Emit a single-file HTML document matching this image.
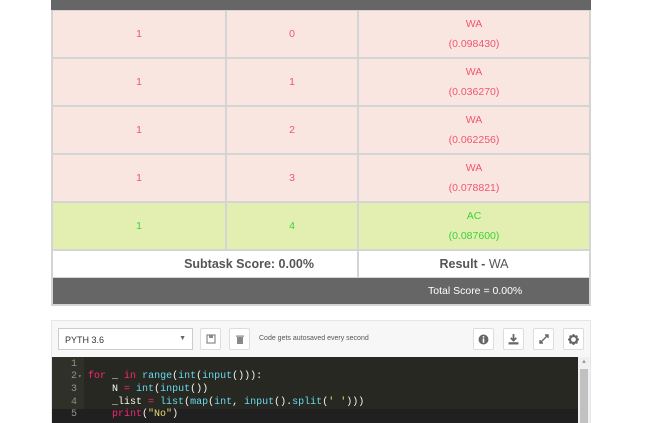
<!DOCTYPE html>
<html><head><meta charset="utf-8"><style>
*{margin:0;padding:0;box-sizing:border-box}
body{width:645px;height:423px;overflow:hidden;background:#fff;font-family:"Liberation Sans",Arial,sans-serif;position:relative}
.a{position:absolute}
.hdr{left:51px;top:0;width:540px;height:10px;background:#666}
.tbl{left:51px;top:10px;width:540px;height:296px;background:#d4d4d4}
.c{position:absolute;display:flex;align-items:center;justify-content:center;flex-direction:column;font-size:10.5px;text-align:center}
.r{background:#f9e6e1;color:#f0566f}
.g{background:#e3efb0;color:#3ed13e}
.c div{line-height:20px}
.w{background:#fff;color:#555;font-size:12.5px;font-weight:bold}
.tot{background:#666;color:#fff;font-size:10.5px}
.btn{position:absolute;width:21px;height:22px;border:1px solid #ddd;background:#fff;border-radius:2px;display:flex;align-items:center;justify-content:center}
.code{font-family:"Liberation Mono","DejaVu Sans Mono",monospace;font-size:10px;color:#f8f8f2}
.ln{position:absolute;left:52px;width:25px;text-align:right;color:#8f908a;font-family:"Liberation Mono",monospace;font-size:10px}
.cl{position:absolute;left:88px;white-space:pre}
.k{color:#f92672}.f{color:#66d9ef}.s{color:#e6db74}
</style></head><body>
<div class="a hdr"></div>
<div class="a tbl">
<div class="c r" style="left:2px;top:1px;width:172px;height:46px">1</div>
<div class="c r" style="left:176px;top:1px;width:130px;height:46px">0</div>
<div class="c r" style="left:308px;top:1px;width:230px;height:46px"><div>WA</div><div>(0.098430)</div></div>
<div class="c r" style="left:2px;top:49px;width:172px;height:46px">1</div>
<div class="c r" style="left:176px;top:49px;width:130px;height:46px">1</div>
<div class="c r" style="left:308px;top:49px;width:230px;height:46px"><div>WA</div><div>(0.036270)</div></div>
<div class="c r" style="left:2px;top:97px;width:172px;height:46px">1</div>
<div class="c r" style="left:176px;top:97px;width:130px;height:46px">2</div>
<div class="c r" style="left:308px;top:97px;width:230px;height:46px"><div>WA</div><div>(0.062256)</div></div>
<div class="c r" style="left:2px;top:145px;width:172px;height:46px">1</div>
<div class="c r" style="left:176px;top:145px;width:130px;height:46px">3</div>
<div class="c r" style="left:308px;top:145px;width:230px;height:46px"><div>WA</div><div>(0.078821)</div></div>
<div class="c g" style="left:2px;top:193px;width:172px;height:46px">1</div>
<div class="c g" style="left:176px;top:193px;width:130px;height:46px">4</div>
<div class="c g" style="left:308px;top:193px;width:230px;height:46px"><div>AC</div><div>(0.087600)</div></div>
<div class="c w" style="left:2px;top:241px;width:304px;height:26px;align-items:flex-end;padding-right:43px">Subtask Score: 0.00%</div>
<div class="c w" style="left:308px;top:241px;width:230px;height:26px;flex-direction:row">Result -&nbsp;<span style="font-weight:normal">WA</span></div>
<div class="c tot" style="left:2px;top:268px;width:536px;height:26px;flex-direction:row;justify-content:flex-start;padding-left:375px">Total Score = 0.00%</div>
</div>

<div class="a" style="left:51px;top:320px;width:540px;height:103px;background:#f7f7f7;border:1px solid #e6e6e6"></div>
<div class="a" style="left:58px;top:328px;width:135px;height:22px;background:#fff;border:1px solid #ccc;font-size:9px;color:#333;padding:6px 0 0 6px">PYTH 3.6<span style="position:absolute;right:6px;top:6px;font-size:7px;color:#666">▼</span></div>
<div class="btn" style="left:200px;top:328px"><svg width="10" height="10" viewBox="0 0 10 10"><rect x="1" y="1" width="8" height="8" fill="none" stroke="#888" stroke-width="1.2"/><rect x="3" y="1" width="4" height="3" fill="#888"/></svg></div>
<div class="btn" style="left:229px;top:328px"><svg width="10" height="10" viewBox="0 0 10 10"><rect x="2" y="3" width="6" height="7" fill="#888"/><rect x="1" y="1.5" width="8" height="1.2" fill="#888"/></svg></div>
<div class="a" style="left:259px;top:335px;font-size:7px;color:#555">Code gets autosaved every second</div>
<div class="btn" style="left:473px;top:328px"><svg width="11" height="11" viewBox="0 0 10 10"><circle cx="5" cy="5" r="4.5" fill="#666"/><rect x="4.3" y="4" width="1.4" height="4" fill="#fff"/><circle cx="5" cy="2.6" r="0.8" fill="#fff"/></svg></div>
<div class="btn" style="left:503px;top:328px"><svg width="11" height="11" viewBox="0 0 10 10"><path d="M5 0v6M2.5 3.5L5 6l2.5-2.5" stroke="#666" stroke-width="1.6" fill="none"/><rect x="0.5" y="7.5" width="9" height="2" fill="#666"/></svg></div>
<div class="btn" style="left:533px;top:328px"><svg width="10" height="10" viewBox="0 0 10 10"><path d="M1 9L9 1M6 1h3v3M1 6v3h3" stroke="#666" stroke-width="1.4" fill="none"/></svg></div>
<div class="btn" style="left:563px;top:328px"><svg width="11" height="11" viewBox="0 0 10 10"><circle cx="5" cy="5" r="3.2" fill="none" stroke="#666" stroke-width="2"/><path d="M5 0v2M5 8v2M0 5h2M8 5h2M1.5 1.5l1.4 1.4M7.1 7.1l1.4 1.4M1.5 8.5l1.4-1.4M7.1 2.9l1.4-1.4" stroke="#666" stroke-width="1.6"/></svg></div>

<div class="a" style="left:52px;top:357px;width:538px;height:66px;background:#272822"></div>
<div class="a" style="left:52px;top:357px;width:32px;height:66px;background:#2f3129"></div>
<div class="a" style="left:52px;top:409px;width:526px;height:14px;background:#202020"></div>
<div class="a" style="left:578px;top:357px;width:12px;height:66px;background:#f0f0f0"></div>
<div class="a" style="left:580px;top:369px;width:8px;height:54px;background:#c1c1c1"></div>
<div class="a" style="left:581px;top:359px;font-size:6px;color:#999">▲</div>
<div class="code">
<div class="ln" style="top:359px">1</div>
<div class="ln" style="top:371px">2</div><div class="a" style="left:78px;top:373px;font-size:6px;color:#8f908a">▾</div>
<div class="ln" style="top:384px">3</div>
<div class="ln" style="top:397px">4</div>
<div class="ln" style="top:409px">5</div>
<div class="cl" style="top:371px"><span class="k">for</span> _ <span class="k">in</span> <span class="f">range</span>(<span class="f">int</span>(<span class="f">input</span>())):</div>
<div class="cl" style="top:384px">    N <span class="k">=</span> <span class="f">int</span>(<span class="f">input</span>())</div>
<div class="cl" style="top:397px">    _list <span class="k">=</span> <span class="f">list</span>(<span class="f">map</span>(<span class="f">int</span>, <span class="f">input</span>().<span class="f">split</span>(<span class="s">' '</span>)))</div>
<div class="cl" style="top:409px">    <span class="k">print</span>(<span class="s">"No"</span>)</div>
</div>
</body></html>
